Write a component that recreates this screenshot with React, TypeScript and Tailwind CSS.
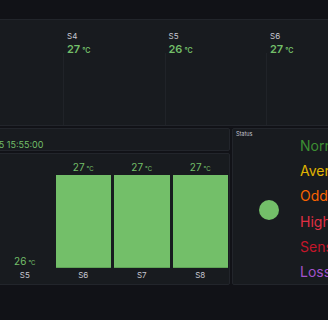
import React from "react";

const topStats = [
  { name: "S4", value: "27" },
  { name: "S5", value: "26" },
  { name: "S6", value: "27" },
];

const bars = [
  { name: "S5", value: "26", h: 0 },
  { name: "S6", value: "27", h: 93 },
  { name: "S7", value: "27", h: 93 },
  { name: "S8", value: "27", h: 93 },
];

const legend = [
  { label: "Normal", color: "text-[#3d8f33]" },
  { label: "Average", color: "text-[#e0b400]" },
  { label: "Odd", color: "text-[#fa6400]" },
  { label: "High", color: "text-[#e02f44]" },
  { label: "Sensor", color: "text-[#c4162a]" },
  { label: "Loss", color: "text-[#a352cc]" },
];

export default function App() {
  return (
    <div className="w-[328px] h-[320px] overflow-hidden bg-[#111217] font-['Inter',sans-serif] flex flex-col pt-[19px]">
      {/* Top stat panel */}
      <div className="h-[107px] -mx-[4px] shrink-0 bg-[#181b1f] border border-[#22252b] rounded-[2px] overflow-hidden flex">
        <div className="flex ml-[66px] h-full">
          {topStats.map((s) => (
            <div key={s.name} className="w-[101.5px] shrink-0 flex flex-col h-full">
              <div className="pl-[4px] pt-[11px]">
                <div className="text-[8px] leading-[10px] text-[#c7c7d1]">{s.name}</div>
                <div className="text-[#73bf69] font-semibold leading-[13px] whitespace-nowrap">
                  <span className="text-[11px]">{s.value}</span>
                  <span className="text-[7px] ml-[2px]">°C</span>
                </div>
              </div>
              <div className="flex-1 border-l border-[#202328] -mt-[4px]" />
            </div>
          ))}
        </div>
      </div>

      {/* Lower row */}
      <div className="h-[157px] mt-[2px] shrink-0 flex gap-[2px]">
        <div className="w-[234px] -ml-[4px] shrink-0 flex flex-col gap-[2px]">
          <div className="h-[23px] shrink-0 bg-[#181b1f] border border-[#22252b] rounded-[2px] overflow-hidden pt-[10px]">
            <div className="ml-[-46px] whitespace-nowrap text-[9px] leading-[11px] text-[#73bf69]">
              2024-04-05 15:55:00
            </div>
          </div>
          <div className="flex-1 bg-[#181b1f] border border-[#22252b] rounded-[2px] overflow-hidden flex gap-[3px] pb-[4px]">
            {bars.map((b) => (
              <div key={b.name} className="w-[55.5px] shrink-0 flex flex-col justify-end">
                <div className="text-center text-[#73bf69] leading-[10px] whitespace-nowrap">
                  <span className="text-[10px]">{b.value}</span>
                  <span className="text-[6px] ml-[2px]">°C</span>
                </div>
                {b.h > 0 && (
                  <div className="bg-[#73bf69] border-b border-[#5fa356] mt-[1px]" style={{ height: b.h }} />
                )}
                <div className="mt-[2px] text-center text-[8px] leading-[10px] text-[#c7c7d1]">{b.name}</div>
              </div>
            ))}
          </div>
        </div>

        {/* Status panel */}
        <div className="flex-1 -mr-[4px] bg-[#181b1f] border border-[#22252b] rounded-[2px] overflow-hidden flex">
          <div className="w-[67px] shrink-0 flex flex-col">
            <div className="pl-[3px] pt-[2px] text-[5.5px] leading-[7px] text-[#c7c7d1]">Status</div>
            <div className="flex-1 flex items-center pl-[26px] pb-[3px]">
              <div className="w-[20px] h-[20px] rounded-full bg-[#73bf69]" />
            </div>
          </div>
          <div className="flex flex-col pt-[4px]">
            {legend.map((l) => (
              <div key={l.label} className={`h-[25.5px] flex items-center text-[14px] whitespace-nowrap ${l.color}`}>
                {l.label}
              </div>
            ))}
          </div>
        </div>
      </div>
    </div>
  );
}
